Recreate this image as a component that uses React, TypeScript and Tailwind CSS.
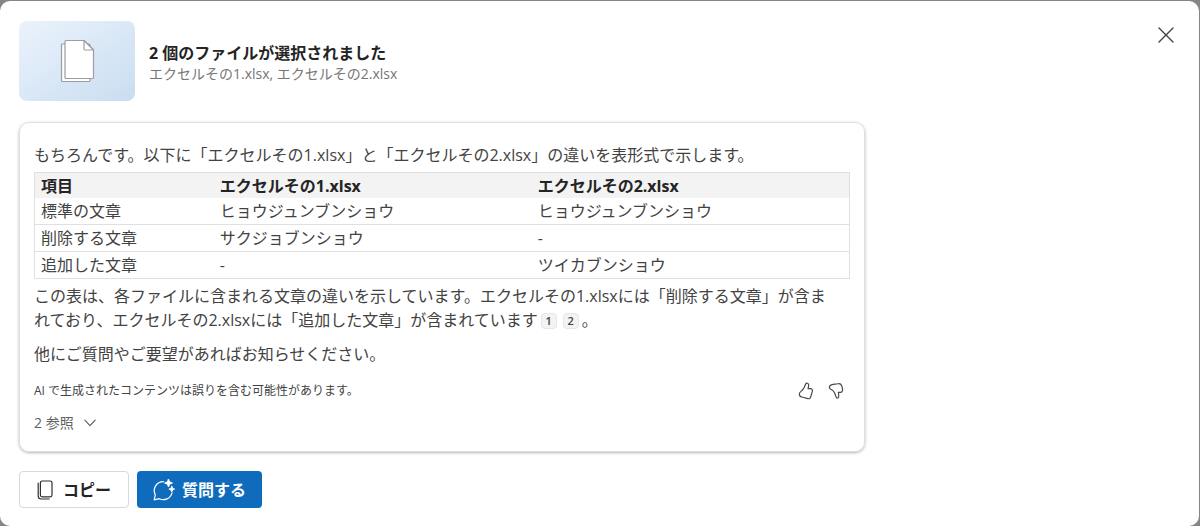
import type { ReactNode } from "react";

const files = ["エクセルその1.xlsx", "エクセルその2.xlsx"];

const rows = [
  { item: "標準の文章", first: "ヒョウジュンブンショウ", second: "ヒョウジュンブンショウ" },
  { item: "削除する文章", first: "サクジョブンショウ", second: "-" },
  { item: "追加した文章", first: "-", second: "ツイカブンショウ" },
];

function FilesIcon() {
  return (
    <svg width="36" height="44" viewBox="-2 -1 36 44" fill="white" stroke="#9a9da1" strokeWidth="1.2" strokeLinejoin="round">
      <path d="M1.500 4h26.500a1 1 0 0 1 1 1v35.500a1 1 0 0 1-1 1h-26.500a1 1 0 0 1-1-1v-35.500a1 1 0 0 1 1-1z" />
      <path d="M5 .5h18l9.500 9.500v27.500a1 1 0 0 1-1 1h-26.500a1 1 0 0 1-1-1v-36a1 1 0 0 1 1-1z" />
      <path d="M23 .5v8.500a1 1 0 0 0 1 1h8.500z" />
    </svg>
  );
}

function CloseIcon() {
  return (
    <svg width="16" height="16" viewBox="0 0 16 16" fill="none" stroke="#424242" strokeWidth="1.4" strokeLinecap="round">
      <path d="M1 1l14 14M15 1L1 15" />
    </svg>
  );
}

function ThumbUpIcon() {
  return (
    <svg width="16" height="18" viewBox="0 0 48 54" fill="none" stroke="#4a4a4a" strokeWidth="3.6" strokeLinejoin="round">
      <path d="M4 36C4 29 11 28 15 22C19 17 21 12 23 6C24 2 32 3 32 9C32 13 31 17 30 20L38 20C42 20 44 24 43 28L38 45C37 49 34 51 30 50L11 45C6 44 4 41 4 36Z" />
    </svg>
  );
}

function ThumbDownIcon() {
  return (
    <svg width="16" height="18" viewBox="0 0 48 54" fill="none" stroke="#4a4a4a" strokeWidth="3.6" strokeLinejoin="round">
      <path d="M4 17C5 22 11 22 15 26C20 31 22 37 24 44C25 50 31 50 32 45C33 40 32 36 31 31L38 31C43 30 45 25 43 18L41 11C39 6 35 4 30 5L12 8C7 9 4 12 4 17Z" />
    </svg>
  );
}

function ChevronIcon() {
  return (
    <svg width="12" height="8" viewBox="0 0 12 8" fill="none" stroke="#616161" strokeWidth="1.2" strokeLinecap="round" strokeLinejoin="round">
      <path d="M.8 1.200L6 6.600l5.200-5.400" />
    </svg>
  );
}

function CopyIcon() {
  return (
    <svg width="16" height="20" viewBox="0 0 16 20" fill="none" stroke="#303030" strokeWidth="1.200" strokeLinecap="round">
      <rect x="3.400" y="1" width="11.600" height="15.800" rx="1.800" />
      <path d="M1.200 3.200v12.800a3 3 0 0 0 3 3h8" />
    </svg>
  );
}

function ChatSparkleIcon() {
  return (
    <svg width="22" height="22" viewBox="0 0 22 22" fill="none" stroke="white" strokeWidth="1.200" strokeLinecap="round" strokeLinejoin="round">
      <path d="M10.500 2.600A9 9 0 0 0 2.300 15.800L1.200 20.800L6.200 19.700A9 9 0 0 0 19 13.800" />
      <path
        d="M15.500 0l1.200 2.800 2.800 1.200-2.800 1.200-1.200 2.800-1.200-2.800-2.800-1.200 2.800-1.200zM18.800 7.200l.9 2 2 .9-2 .9-.9 2-.9-2-2-.9 2-.9z"
        fill="white"
        strokeWidth=".8"
      />
    </svg>
  );
}

function Citation({ children }: { children: ReactNode }) {
  return (
    <button className="mx-[3px] inline-flex h-4 w-4 items-center justify-center rounded border border-[#e6e6e6] bg-[#f3f3f3] align-[1px] text-[11px] leading-none font-semibold text-[#424242]">
      {children}
    </button>
  );
}

export default function App() {
  return (
    <div className="flex min-h-screen bg-[#858585] pt-px pr-px font-['Open_Sans','Noto_Sans_CJK_JP',sans-serif] text-[#424242]">
      <main role="dialog" aria-labelledby="dialog-title" className="w-full rounded-[10px] bg-white px-[19px] pt-5 pb-[18px]">
        <header className="flex items-start justify-between">
          <div className="flex items-center gap-[14px]">
            <div className="flex h-20 w-[116px] items-center justify-center rounded-lg bg-linear-to-br from-[#ebf3fc] to-[#c9ddf1]">
              <FilesIcon />
            </div>
            <div className="pt-1">
              <h1 id="dialog-title" className="text-base leading-[22px] font-bold text-[#242424]">
                2 個のファイルが選択されました
              </h1>
              <p className="text-sm leading-5 text-[#767676]">{files.join(", ")}</p>
            </div>
          </div>
          <button aria-label="閉じる" className="p-[6px]">
            <CloseIcon />
          </button>
        </header>

        <section className="mt-[21px] max-w-[846px] rounded-[10px] border border-[#e0e0e0] px-[14px] pt-5 pb-4 shadow-[0_1px_3px_rgba(0,0,0,0.3)]">
          <p className="leading-6">もちろんです。以下に「{files[0]}」と「{files[1]}」の違いを表形式で示します。</p>
          <table className="mt-[5px] w-full table-fixed border-collapse border border-[#e0e0e0] text-left leading-6">
            <thead>
              <tr className="bg-[#f3f3f3] text-[#242424]">
                <th className="w-[22%] px-[6px] pt-px font-bold">項目</th>
                <th className="w-[39%] px-[6px] pt-px font-bold">{files[0]}</th>
                <th className="w-[39%] px-[6px] pt-px font-bold">{files[1]}</th>
              </tr>
            </thead>
            <tbody>
              {rows.map((row) => (
                <tr key={row.item} className="border-b border-[#e0e0e0]">
                  <td className="px-[6px] py-px">{row.item}</td>
                  <td className="px-[6px] py-px">{row.first}</td>
                  <td className="px-[6px] py-px">{row.second}</td>
                </tr>
              ))}
            </tbody>
          </table>
          <p className="mt-[5px] leading-6">
            この表は、各ファイルに含まれる文章の違いを示しています。{files[0]}には「削除する文章」が含ま
            <br />
            れており、{files[1]}には「追加した文章」が含まれています
            <Citation>1</Citation>
            <Citation>2</Citation>。
          </p>
          <p className="mt-[10px] leading-6">他にご質問やご要望があればお知らせください。</p>

          <div className="mt-[13px] flex items-center justify-between">
            <p className="text-xs leading-6">AI で生成されたコンテンツは誤りを含む可能性があります。</p>
            <div className="flex gap-[14px] pr-[6px]">
              <button aria-label="良い回答">
                <ThumbUpIcon />
              </button>
              <button aria-label="良くない回答">
                <ThumbDownIcon />
              </button>
            </div>
          </div>
          <button className="mt-2 flex items-center gap-[10px] text-sm leading-6 text-[#616161]">
            2 参照
            <ChevronIcon />
          </button>
        </section>

        <footer className="mt-[19px] flex gap-2 text-base font-bold">
          <button className="flex h-[37px] items-center gap-[10px] rounded border border-[#d9d9d9] px-[17px] text-[#242424]">
            <CopyIcon />
            コピー
          </button>
          <button className="flex h-[37px] items-center gap-[7px] rounded bg-[#0f6cbd] px-4 text-white">
            <ChatSparkleIcon />
            質問する
          </button>
        </footer>
      </main>
    </div>
  );
}
